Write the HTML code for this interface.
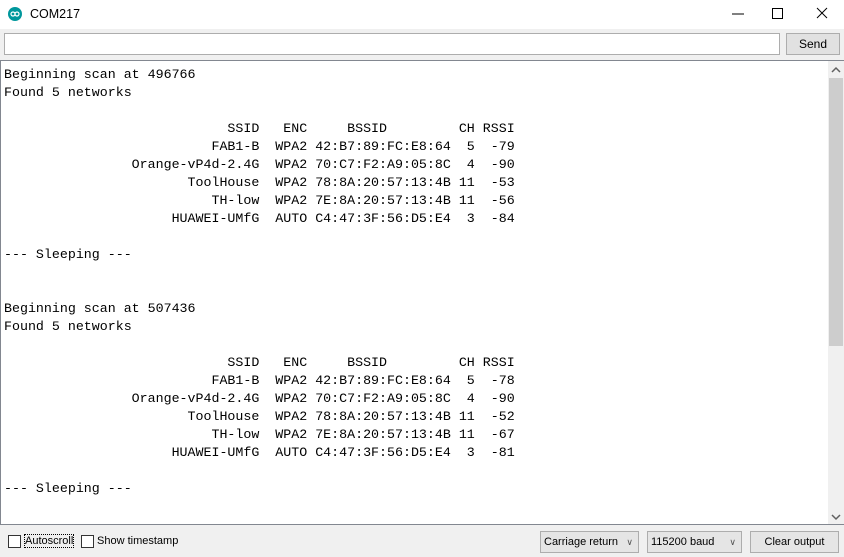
<!DOCTYPE html>
<html><head><meta charset="utf-8"><style>
body{margin:0;width:844px;height:557px;background:#f0f0f0;position:relative;overflow:hidden;font-family:"Liberation Sans",Arial,sans-serif;}
.title{position:absolute;left:0;top:0;width:844px;height:29px;background:#fff;}
.title .t{position:absolute;left:30px;top:7px;font-size:12.5px;color:#000;}
.logo{position:absolute;left:8px;top:7px;width:14px;height:14px;border-radius:50%;background:#00979c;}
.in{position:absolute;left:4px;top:33px;width:774px;height:20px;background:#fff;border:1px solid #adadad;}
.send{position:absolute;left:786px;top:33px;width:52px;height:20px;background:#e1e1e1;border:1px solid #adadad;font-size:12px;text-align:center;line-height:20px;}
.ta{position:absolute;left:0;top:60px;width:843px;height:463px;background:#fff;border-top:1px solid #828790;border-bottom:1px solid #828790;border-left:1px solid #828790;}
pre{margin:0;position:absolute;left:3px;top:5px;font-family:"Liberation Mono",monospace;font-size:13.3px;line-height:18px;color:#000;}
.sb{position:absolute;right:0;top:61px;width:16px;height:463px;background:#f0f0f0;}
.thumb{position:absolute;left:1px;top:17px;width:14px;height:268px;background:#cdcdcd;}
.cb{position:absolute;top:535px;width:11px;height:11px;border:1px solid #333;background:#fff;}
.lbl{position:absolute;top:535px;font-size:11px;}
.dd{position:absolute;top:531px;height:20px;border:1px solid #adadad;background:#e5e5e5;font-size:11px;line-height:20px;padding-left:3px;box-sizing:content-box;}
.dd span{position:absolute;right:5px;top:0;color:#555;font-size:9px;}
</style></head><body>
<div class="title"><div class="logo"><svg width="14" height="14"><circle cx="5" cy="7" r="2" fill="none" stroke="#fff" stroke-width="1.2"/><circle cx="9" cy="7" r="2" fill="none" stroke="#fff" stroke-width="1.2"/></svg></div><div class="t">COM217</div>
<svg style="position:absolute;left:720px;top:0" width="124" height="29"><line x1="12" y1="14" x2="24" y2="14" stroke="#000"/><rect x="52.5" y="8.5" width="10" height="10" fill="none" stroke="#000"/><line x1="97" y1="8" x2="107" y2="18" stroke="#000"/><line x1="107" y1="8" x2="97" y2="18" stroke="#000"/></svg></div>
<div class="in"></div><div class="send">Send</div>
<div class="ta"><pre>Beginning scan at 496766
Found 5 networks

                            SSID   ENC     BSSID         CH RSSI
                          FAB1-B  WPA2 42:B7:89:FC:E8:64  5  -79
                Orange-vP4d-2.4G  WPA2 70:C7:F2:A9:05:8C  4  -90
                       ToolHouse  WPA2 78:8A:20:57:13:4B 11  -53
                          TH-low  WPA2 7E:8A:20:57:13:4B 11  -56
                     HUAWEI-UMfG  AUTO C4:47:3F:56:D5:E4  3  -84

--- Sleeping ---


Beginning scan at 507436
Found 5 networks

                            SSID   ENC     BSSID         CH RSSI
                          FAB1-B  WPA2 42:B7:89:FC:E8:64  5  -78
                Orange-vP4d-2.4G  WPA2 70:C7:F2:A9:05:8C  4  -90
                       ToolHouse  WPA2 78:8A:20:57:13:4B 11  -52
                          TH-low  WPA2 7E:8A:20:57:13:4B 11  -67
                     HUAWEI-UMfG  AUTO C4:47:3F:56:D5:E4  3  -81

--- Sleeping ---</pre></div>
<div class="sb"><svg style="position:absolute;left:3px;top:5px" width="10" height="8"><polyline points="1,6 5,2 9,6" fill="none" stroke="#606060" stroke-width="1.5"/></svg><div class="thumb"></div><svg style="position:absolute;left:3px;top:452px" width="10" height="8"><polyline points="1,2 5,6 9,2" fill="none" stroke="#606060" stroke-width="1.5"/></svg></div>
<div class="cb" style="left:8px"></div><div class="lbl" style="left:25px;outline:1px dotted #000">Autoscroll</div>
<div class="cb" style="left:81px"></div><div class="lbl" style="left:97px">Show timestamp</div>
<div class="dd" style="left:540px;width:94px">Carriage return<span>&#8744;</span></div>
<div class="dd" style="left:647px;width:90px">115200 baud<span>&#8744;</span></div>
<div class="dd" style="left:750px;width:87px;padding-left:0;text-align:center">Clear output</div>
</body></html>
